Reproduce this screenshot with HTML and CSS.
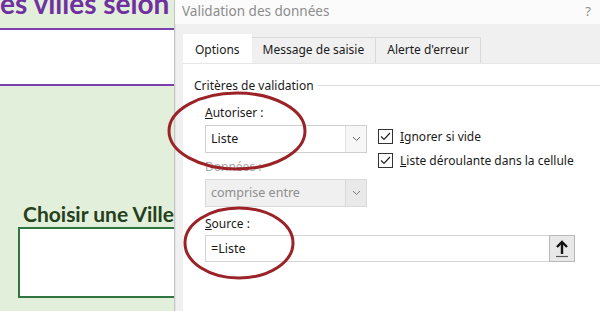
FILE: index.html
```html
<!DOCTYPE html>
<html lang="fr">
<head>
  <meta charset="UTF-8" />
  <title>Validation des données</title>
  <link rel="stylesheet" href="styles.css">
</head>
<body>

  <!-- Feuille Excel derriere -->
  <div class="sheet">
    <div class="sheet-title"><span>es villes selon</span></div>
    <div class="sheet-band"></div>
    <div class="choose">
      <div class="choose-label">Choisir une Ville</div>
      <div class="choose-box"></div>
    </div>
  </div>

  <!-- Boite de dialogue -->
  <div class="dialog">
    <div class="titlebar">
      <span class="title">Validation des données</span>
      <span class="help">?</span>
    </div>

    <div class="tabs">
      <div class="tab active">Options</div>
      <div class="tab">Message de saisie</div>
      <div class="tab">Alerte d'erreur</div>
    </div>

    <div class="panel">
      <div class="group-head">
        <span>Critères de validation</span>
        <span class="group-line"></span>
      </div>

      <div class="fields">
        <div class="col-left">
          <div class="lbl"><u>A</u>utoriser :</div>
          <div class="select">
            <span class="select-text">Liste</span>
            <span class="select-arrow"><svg width="9" height="6" viewBox="0 0 9 6"><path d="M1 1 L4.5 4.5 L8 1" fill="none" stroke="#666" stroke-width="1"/></svg></span>
          </div>
          <div class="lbl disabled">Données :</div>
          <div class="select is-disabled">
            <span class="select-text">comprise entre</span>
            <span class="select-arrow"><svg width="9" height="6" viewBox="0 0 9 6"><path d="M1 1 L4.5 4.5 L8 1" fill="none" stroke="#777" stroke-width="1"/></svg></span>
          </div>
        </div>

        <div class="col-right">
          <label class="check">
            <span class="box"><svg width="11" height="9" viewBox="0 0 11 9"><path d="M1 4.5 L4 7.5 L10 1" fill="none" stroke="#222" stroke-width="1.2"/></svg></span>
            <span><u>I</u>gnorer si vide</span>
          </label>
          <label class="check">
            <span class="box"><svg width="11" height="9" viewBox="0 0 11 9"><path d="M1 4.5 L4 7.5 L10 1" fill="none" stroke="#222" stroke-width="1.2"/></svg></span>
            <span><u>L</u>iste déroulante dans la cellule</span>
          </label>
        </div>
      </div>

      <div class="lbl source-lbl"><u>S</u>ource :</div>
      <div class="source-row">
        <div class="source-input">=Liste</div>
        <div class="source-btn">
          <svg width="14" height="18" viewBox="0 0 14 18"><path d="M7 2 V14" stroke="#111" stroke-width="2.4"/><path d="M2 7 L7 2 L12 7" fill="none" stroke="#111" stroke-width="2.4"/><path d="M1 16.5 H13" stroke="#555" stroke-width="1.2"/></svg>
        </div>
      </div>
    </div>
  </div>

  <!-- Cercles rouges -->
  <svg class="marks" width="600" height="311" viewBox="0 0 600 311">
    <ellipse cx="237" cy="131" rx="68" ry="38" fill="none" stroke="#9b2328" stroke-width="3"/>
    <ellipse cx="239" cy="243" rx="54" ry="35" fill="none" stroke="#9b2328" stroke-width="3"/>
  </svg>

</body>
</html>
```

FILE: styles.css
```css
body {
  margin: 0;
  width: 600px;
  height: 311px;
  overflow: hidden;
  display: flex;
  position: relative;
  font-family: 'Noto Sans', 'Open Sans', sans-serif;
  font-size: 12px;
  color: #1a1a1a;
}

/* feuille */
.sheet {
  width: 174px;
  flex-shrink: 0;
  background: #e2efda;
  overflow: hidden;
  font-family: 'Lato', 'Liberation Sans', sans-serif;
}

.sheet-title {
  height: 28px;
  overflow: hidden;
  white-space: nowrap;
}

.sheet-title span {
  display: block;
  margin-top: -12px;
  font-size: 28px;
  font-weight: bold;
  color: #7030a0;
  line-height: 30px;
}

.sheet-band {
  height: 54px;
  background: #fff;
  border-top: 2px solid #7e3fae;
  border-bottom: 2px solid #7e3fae;
}

.choose {
  padding: 116px 0 0 18px;
}

.choose-label {
  font-size: 21px;
  font-weight: bold;
  color: #24401c;
  padding-left: 5px;
  line-height: 24px;
  white-space: nowrap;
}

.choose-box {
  height: 67px;
  margin-top: 1px;
  background: #fff;
  border: 2px solid #2f7540;
  border-right: none;
}

/* dialogue */
.dialog {
  flex: 1;
  display: flex;
  flex-direction: column;
  background: #f0f0f0;
  border-left: 1px solid #c4c4c4;
  box-shadow: inset 1px 0 0 #e4e4e4;
}

.titlebar {
  height: 22px;
  background: #fbfbfb;
  display: flex;
  justify-content: space-between;
  align-items: center;
  padding: 0 9px 2px 7px;
}

.title {
  font-size: 13.5px;
  color: #8c8c8c;
}

.help {
  font-size: 13px;
  color: #8c8c8c;
}

.tabs {
  display: flex;
  align-items: flex-end;
  padding: 10px 0 0 8px;
}

.tab {
  height: 25px;
  line-height: 24px;
  padding: 0 11px;
  border: 1px solid #dadada;
  border-bottom: none;
  background: #f0f0f0;
  white-space: nowrap;
}

.tab + .tab {
  border-left: none;
}

.tab.active {
  height: 28px;
  background: #fff;
  line-height: 29px;
  border-color: #fff;
}

.panel {
  flex: 1;
  margin-left: 8px;
  background: #fff;
  border-top: 1px solid #e6e6e6;
  padding: 13px 0 0 11px;
}

.group-head {
  display: flex;
  align-items: center;
  gap: 4px;
  height: 16px;
}

.group-line {
  flex: 1;
  height: 1px;
  background: #dcdcdc;
}

.fields {
  display: flex;
  gap: 11px;
  padding-left: 11px;
  margin-top: 11px;
}

.col-left {
  width: 162px;
}

.lbl {
  height: 18px;
  line-height: 18px;
}

.lbl.disabled {
  color: #a8a8a8;
  margin-top: 5px;
}

.select {
  height: 26px;
  margin-top: 3px;
  border: 1px solid #cfcfcf;
  display: flex;
  background: #fff;
}

.select-text {
  flex: 1;
  padding-left: 5px;
  line-height: 26px;
  font-size: 12.5px;
}

.select-arrow {
  width: 20px;
  display: flex;
  align-items: center;
  justify-content: center;
  border-left: 1px solid #e2e2e2;
  background: #f7f7f7;
}

.select.is-disabled {
  background: #f0f0f0;
  border-color: #d9d9d9;
  color: #8d8d8d;
}

.select.is-disabled .select-arrow {
  background: #e9e9e9;
  border-left-color: #d9d9d9;
}

.col-right {
  display: flex;
  flex-direction: column;
  gap: 9px;
  padding-top: 25px;
}

.check {
  display: flex;
  align-items: center;
  gap: 7px;
  height: 15px;
}

.box {
  width: 13px;
  height: 13px;
  border: 1px solid #333;
  display: flex;
  align-items: center;
  justify-content: center;
}

.source-lbl {
  margin: 8px 0 0 11px;
}

.source-row {
  display: flex;
  margin: 2px 0 0 11px;
  height: 27px;
  width: 370px;
}

.source-input {
  flex: 1;
  border: 1px solid #d4d4d4;
  border-right: none;
  padding-left: 5px;
  line-height: 25px;
  font-size: 12.5px;
}

.source-btn {
  width: 24px;
  border: 1px solid #b8b8b8;
  background: #e8e8e8;
  display: flex;
  align-items: center;
  justify-content: center;
}

.marks {
  position: absolute;
  top: 0;
  left: 0;
  pointer-events: none;
}
```
